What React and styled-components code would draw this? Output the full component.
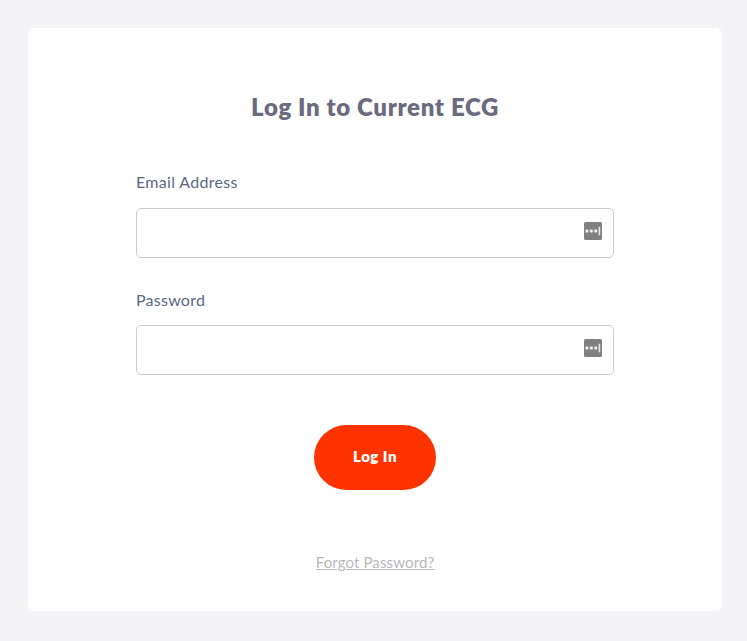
import React from 'react';
import styled, { createGlobalStyle } from 'styled-components';

const GlobalStyle = createGlobalStyle`
  *, *::before, *::after { box-sizing: border-box; }
  body {
    margin: 0;
    background: #f4f4f7;
    font-family: Lato, "Open Sans", sans-serif;
  }
`;

const Page = styled.main`
  min-height: 641px;
  padding: 27.5px 25px 30px 28px;
`;

const Card = styled.form`
  display: flex;
  flex-direction: column;
  align-items: center;
  height: 583px;
  padding: 60px 108px 0;
  background: #fff;
  border-radius: 7px;
`;

const Title = styled.h1`
  margin: 0 0 52px;
  color: #6b6b7e;
  font-size: 24px;
  font-weight: 800;
  line-height: 37px;
  white-space: nowrap;
  letter-spacing: 0.65px;
`;

const Field = styled.div`
  width: 100%;
  height: ${({ $height }) => $height}px;
`;

const Label = styled.label`
  display: block;
  height: 31px;
  padding-top: ${({ $drop }) => $drop || 0}px;
  color: #5c6880;
  font-size: 16px;
  line-height: 10px;
  letter-spacing: ${({ $tracking }) => $tracking}px;
`;

const InputFrame = styled.div`
  display: flex;
  align-items: center;
  height: 50px;
  padding: 0 11px 4px;
  border: 1px solid #cccccf;
  border-radius: 5px;
`;

const Input = styled.input`
  flex: 1;
  min-width: 0;
  border: 0;
  outline: 0;
  background: transparent;
  font: inherit;
`;

const KeyIcon = () => (
  <svg width="18" height="18" viewBox="0 0 18 18" aria-hidden="true">
    <rect width="18" height="18" rx="1.5" fill="#808080" />
    <rect x="1.5" y="7.5" width="2.9" height="2.9" rx="0.6" fill="#eee" />
    <rect x="5.9" y="7.5" width="2.9" height="2.9" rx="0.6" fill="#eee" />
    <rect x="10.3" y="7.5" width="2.9" height="2.9" rx="0.6" fill="#eee" />
    <path d="M15.4 4.8v8.5" stroke="#e6e6e6" strokeWidth="1.6" />
  </svg>
);

const Button = styled.button`
  width: 122px;
  height: 65px;
  margin-top: 16px;
  padding: 0 0 3px;
  border: 0;
  border-radius: 33px;
  background: #ff3300;
  color: #fff;
  font: 800 15px Lato, sans-serif;
  letter-spacing: 0.5px;
`;

const Link = styled.a`
  margin-top: 62px;
  color: #b8b8bb;
  font-size: 15px;
  line-height: 20px;
  letter-spacing: 0.13px;
  text-decoration: underline;
`;

export default function App() {
  return (
    <>
      <GlobalStyle />
      <Page>
        <Card onSubmit={(e) => e.preventDefault()}>
          <Title>Log In to Current ECG</Title>
          <Field $height={117}>
            <Label htmlFor="email" $tracking={0.32}>Email Address</Label>
            <InputFrame><Input id="email" type="email" /><KeyIcon /></InputFrame>
          </Field>
          <Field $height={115}>
            <Label htmlFor="password" $tracking={0.25} $drop={1}>Password</Label>
            <InputFrame><Input id="password" type="password" /><KeyIcon /></InputFrame>
          </Field>
          <Button type="submit">Log In</Button>
          <Link href="#">Forgot Password?</Link>
        </Card>
      </Page>
    </>
  );
}
